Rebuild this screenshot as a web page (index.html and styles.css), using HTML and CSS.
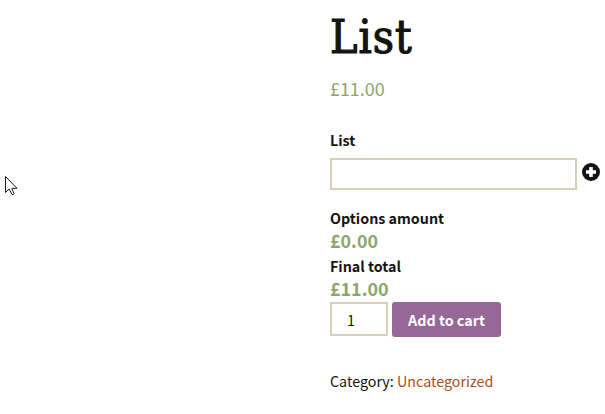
FILE: index.html
```html
<!DOCTYPE html>
<html lang="en">
<head>
<meta charset="utf-8">
<title>List</title>
<link rel="stylesheet" href="styles.css">
</head>
<body>
<main class="summary">
  <h1 class="title">List</h1>
  <p class="price">£11.00</p>
  <form class="cart">
    <label class="label" for="list">List</label>
    <div class="list-row">
      <input class="field" id="list" type="text">
      <button class="add-row" type="button" aria-label="Add">
        <svg class="plus" viewBox="0 0 18 18"><circle cx="9" cy="9" r="9" fill="#141412"/><path d="M9 4v10M4 9h10" stroke="#fff" stroke-width="3.6"/></svg>
      </button>
    </div>
    <dl class="totals">
      <dt>Options amount</dt><dd>£0.00</dd>
      <dt>Final total</dt><dd>£11.00</dd>
    </dl>
    <div class="buy">
      <input class="qty" type="text" value="1" aria-label="Quantity">
      <button class="submit" type="button">Add to cart</button>
    </div>
  </form>
  <p class="meta">Category: <a class="link">Uncategorized</a></p>
</main>
<svg class="cursor" viewBox="0 0 13 20"><path d="M.5 .5V16.5L4.2 13L7 18.5Q8.5 19.2 9 17.6L6.8 12.3H12Z" fill="#fff" stroke="#171725"/></svg>
</body>
</html>
```
FILE: styles.css
```css
* { box-sizing: border-box; }
body {
  margin: 0;
  height: 414px;
  overflow: hidden;
  background: #fff;
  color: #141412;
  font: 14.3px/24px "Noto Sans CJK SC", "Open Sans", sans-serif;
}
.summary { margin-left: 330px; width: 271px; }
.title {
  margin: 0;
  height: 75px;
  padding-top: 7px;
  font: 400 46px/60px "DejaVu Serif Condensed", "DejaVu Serif", serif;
  letter-spacing: 1px;
  -webkit-text-stroke: 1.2px #141412;
}
.price { margin: 0; height: 53px; color: #8aa66c; font-size: 17.9px; line-height: 26px; }
.label { display: block; height: 30px; font-weight: 700; }
.list-row { display: flex; align-items: center; gap: 5px; height: 32px; }
.field, .qty { border: 2px solid #d4d0ba; background: #fff; color: inherit; font: inherit; outline: 0; }
.field { width: 247px; height: 32px; }
.add-row { width: 18px; height: 18px; margin-bottom: 4px; padding: 0; border: 0; background: none; }
.plus { display: block; width: 18px; height: 18px; }
.totals { margin: 16px 0 0; height: 96px; font-weight: 700; }
.totals dt { height: 24px; }
.totals dd { margin: 0; height: 24px; color: #8aa66c; font-size: 17.9px; line-height: 20px; }
.buy { display: flex; gap: 4px; }
.qty { width: 58px; height: 34px; padding: 0 0 0 15px; }
.submit {
  width: 109px;
  height: 35px;
  padding: 1px 0 0;
  border: 0;
  border-radius: 3px;
  background: #966896;
  color: #fff;
  font: inherit;
  font-weight: 700;
}
.meta { margin: 32px 0 0; }
.link { color: #a84f1c; }
.cursor { position: absolute; left: 5px; top: 176px; width: 13px; height: 20px; }
```
